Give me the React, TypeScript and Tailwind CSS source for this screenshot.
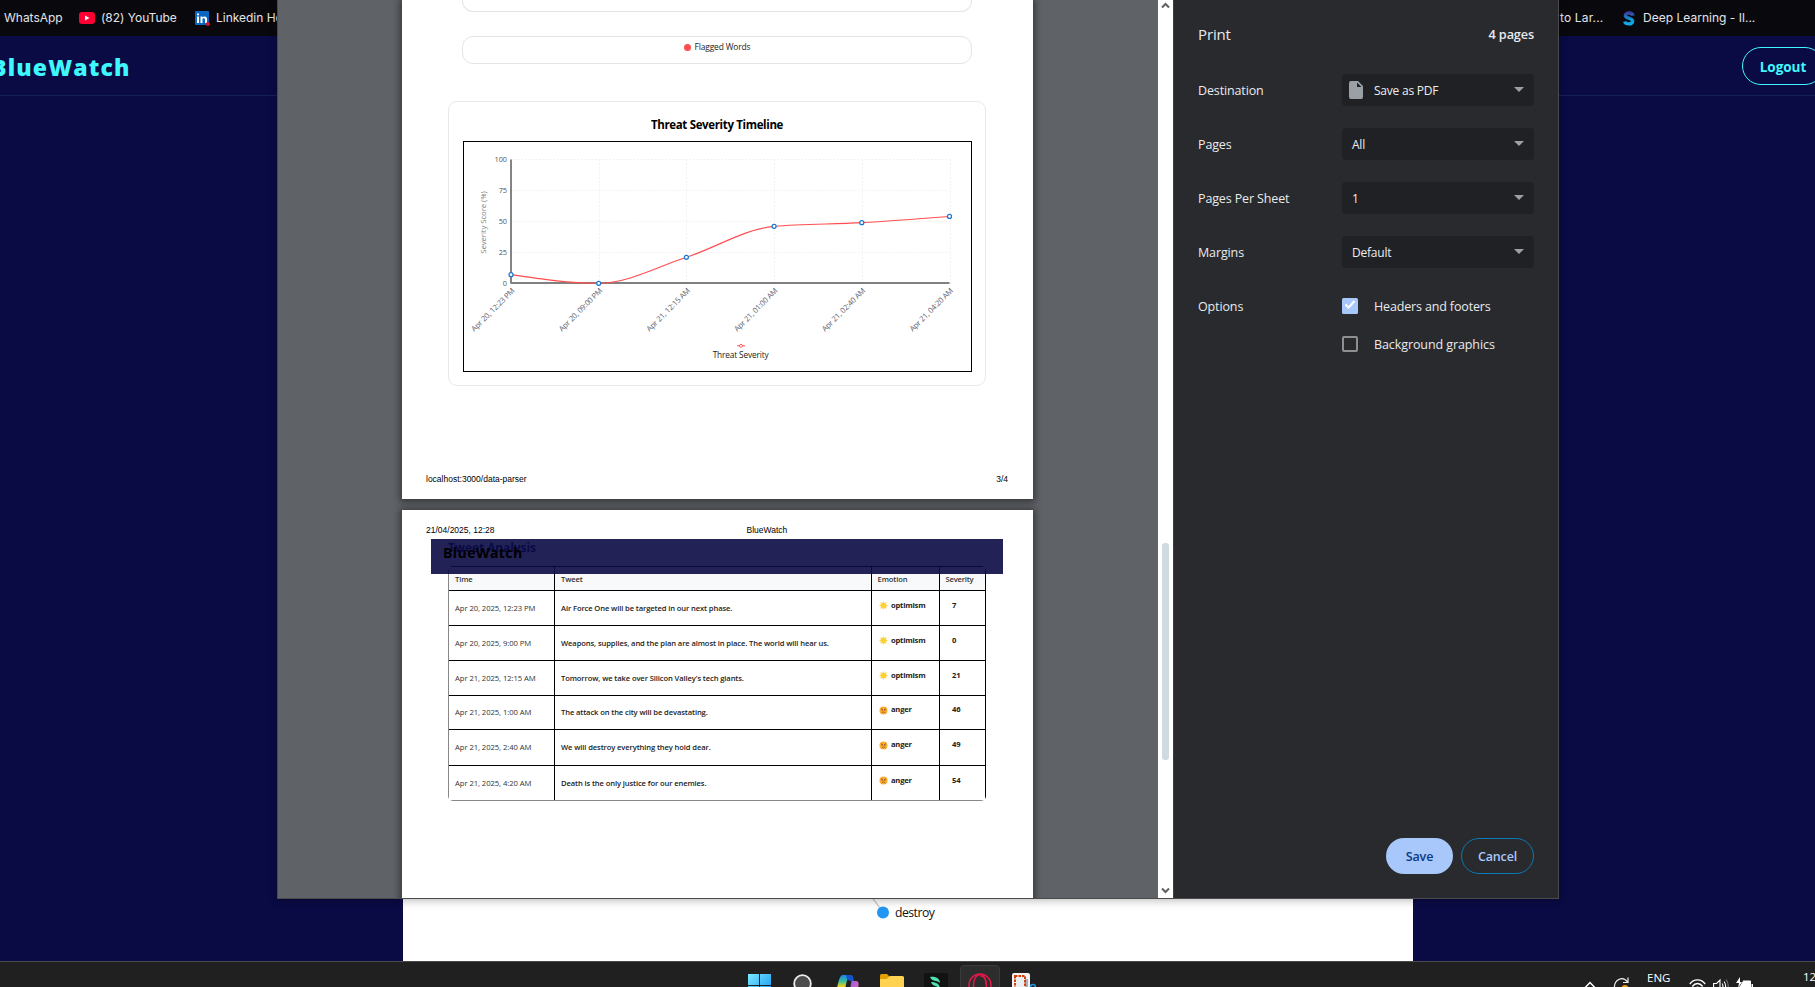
import type { ReactNode } from "react";

const UI = "font-['Open_Sans','Noto_Sans',sans-serif]";

const points = [
  { label: "Apr 20, 12:23 PM", value: 7 },
  { label: "Apr 20, 09:00 PM", value: 0 },
  { label: "Apr 21, 12:15 AM", value: 21 },
  { label: "Apr 21, 01:00 AM", value: 46 },
  { label: "Apr 21, 02:40 AM", value: 49 },
  { label: "Apr 21, 04:20 AM", value: 54 },
];

const rows = [
  { time: "Apr 20, 2025, 12:23 PM", tweet: "Air Force One will be targeted in our next phase.", emotion: "optimism", severity: 7, box: "h-[35px] border-black" },
  { time: "Apr 20, 2025, 9:00 PM", tweet: "Weapons, supplies, and the plan are almost in place. The world will hear us.", emotion: "optimism", severity: 0, box: "h-[35px] border-black" },
  { time: "Apr 21, 2025, 12:15 AM", tweet: "Tomorrow, we take over Silicon Valley's tech giants.", emotion: "optimism", severity: 21, box: "h-[35px] border-black" },
  { time: "Apr 21, 2025, 1:00 AM", tweet: "The attack on the city will be devastating.", emotion: "anger", severity: 46, box: "h-[34px] border-black" },
  { time: "Apr 21, 2025, 2:40 AM", tweet: "We will destroy everything they hold dear.", emotion: "anger", severity: 49, box: "h-[36px] border-black" },
  { time: "Apr 21, 2025, 4:20 AM", tweet: "Death is the only justice for our enemies.", emotion: "anger", severity: 54, box: "h-[35px] border-[#888]" },
];

const px = (i: number) => 47 + i * 87.7;
const py = (v: number) => 141.3 - v * 1.238;

// Monotone cubic interpolation through equally spaced points.
function monotonePath(values: number[]) {
  const xs = values.map((_, i) => px(i));
  const ys = values.map(py);
  const n = xs.length;
  const d = xs.slice(1).map((x, i) => (ys[i + 1] - ys[i]) / (x - xs[i]));
  const m = xs.map((_, i) => {
    if (i === 0 || i === n - 1) return 0;
    const s0 = d[i - 1];
    const s1 = d[i];
    return (Math.sign(s0) + Math.sign(s1)) * Math.min(Math.abs(s0), Math.abs(s1), Math.abs(s0 + s1) / 4) || 0;
  });
  m[0] = (3 * d[0] - m[1]) / 2;
  m[n - 1] = (3 * d[n - 2] - m[n - 2]) / 2;
  let out = `M${xs[0]},${ys[0]}`;
  for (let i = 0; i < n - 1; i++) {
    const h = (xs[i + 1] - xs[i]) / 3;
    out += `C${xs[i] + h},${ys[i] + m[i] * h} ${xs[i + 1] - h},${ys[i + 1] - m[i + 1] * h} ${xs[i + 1]},${ys[i + 1]}`;
  }
  return out;
}

function Chart() {
  const ticks = [0, 25, 50, 75, 100];
  return (
    <svg width="507" height="229" viewBox="0 0 507 229" className={UI}>
      {ticks.map((t) => (
        <line key={t} x1="47" x2="486" y1={Math.floor(py(t)) + 0.5} y2={Math.floor(py(t)) + 0.5} stroke="#f2f2f2" strokeDasharray="2 1.5" />
      ))}
      {points.map((p, i) => (
        <line key={p.label} x1={Math.round(px(i)) + 0.5} x2={Math.round(px(i)) + 0.5} y1={py(100)} y2={py(0) + 3} stroke="#f2f2f2" strokeDasharray="2 1.5" />
      ))}
      <line x1="47" x2="47" y1={py(100)} y2={py(0)} stroke="#666" strokeWidth="1.6" />
      <line x1="46.5" x2="485.5" y1="141" y2="141" stroke="#808080" strokeWidth="2" />
      {ticks.map((t) => (
        <text key={t} x="43" y={py(t) + 2.5} fontSize="7.4" letterSpacing="-0.1" textAnchor="end" fill="#555">
          {t}
        </text>
      ))}
      <text transform="translate(21.5 80.5) rotate(-90)" fontSize="7.8" letterSpacing="-0.1" textAnchor="middle" fill="#808080">
        Severity Score (%)
      </text>
      <path d={monotonePath(points.map((p) => p.value))} fill="none" stroke="#ff4d4f" strokeWidth="1.1" />
      {points.map((p, i) => (
        <g key={p.label}>
          <circle cx={px(i)} cy={py(p.value)} r="2" fill="#fff" stroke="#1976d2" strokeWidth="1.2" />
          <text transform={`translate(${px(i) + 4} ${149.3}) rotate(-45)`} fontSize="7.6" letterSpacing="-0.15" textAnchor="end" fill="#5b6270">
            {p.label}
          </text>
        </g>
      ))}
      <line x1="273" x2="281" y1="203.8" y2="203.8" stroke="#ff4d4f" />
      <circle cx="277" cy="203.8" r="1.5" fill="#fff" stroke="#ff4d4f" strokeWidth="0.9" />
      <text x="276.6" y="216.3" fontSize="8.3" letterSpacing="-0.15" textAnchor="middle" fill="#222">
        Threat Severity
      </text>
    </svg>
  );
}

function EmotionIcon({ kind }: { kind: string }) {
  if (kind === "optimism") {
    return (
      <svg width="9" height="9" viewBox="0 0 18 18">
        <path d="M9 0L11 3.900 15.400 2.600 14.100 7 18 9 14.100 11 15.400 15.400 11 14.100 9 18 7 14.100 2.600 15.400 3.900 11 0 9 3.900 7 2.600 2.600 7 3.900z" fill="#fbd54a" />
        <circle cx="9" cy="9" r="4.500" fill="#fdd02f" />
      </svg>
    );
  }
  return (
    <svg width="9" height="9" viewBox="0 0 18 18">
      <circle cx="9" cy="9" r="8" fill="#fbac35" />
      <path d="M4 5.500l4 2M14 5.500l-4 2M6.200 8v2M11.800 8v2M5.500 14c2-2.500 5-2.500 7 0" stroke="#7a4a20" strokeWidth="1.500" fill="none" />
    </svg>
  );
}

function ReportPages() {
  return (
    <div className={`ml-[124px] flex w-[631px] flex-col ${UI}`}>
      <section className="flex h-[499px] flex-col bg-white shadow-[0_1px_7px_2px_rgba(0,0,0,0.45)]">
        <div className="mr-[61px] ml-[60px] h-[12px] rounded-b-[11px] border border-t-0 border-[#e4e5e9]" />
        <div className="mt-[24px] mr-[61px] ml-[60px] flex h-[28px] items-start justify-center gap-[4px] rounded-[11px] border border-[#e4e5e9] pt-[4px] text-[8.400px] leading-[12px] tracking-[-0.120px] text-[#222]">
          <i className="mt-[3px] size-[7px] rounded-full bg-[#ff4d4f]" />
          Flagged Words
        </div>
        <div className="mt-[37px] mr-[47px] ml-[46px] flex h-[285px] flex-col items-center rounded-[9px] border border-[#e9e9ec] pt-[14px]">
          <h2 className="h-[25px] text-[11.500px] leading-[17px] font-bold tracking-[-0.350px] text-black">Threat Severity Timeline</h2>
          <div className="h-[231px] w-[509px] border border-black">
            <Chart />
          </div>
        </div>
        <footer className="mt-auto flex items-center justify-between pr-[25px] pb-[15px] pl-[24px] font-['Liberation_Sans',sans-serif] text-[8.500px] leading-[10px] text-black">
          <span>localhost:3000/data-parser</span>
          <span>3/4</span>
        </footer>
      </section>
      <section className="relative mt-[11px] flex h-[500px] flex-col bg-white shadow-[0_1px_7px_2px_rgba(0,0,0,0.45)]">
        <header className="flex h-[29px] pt-[15px] pl-[24px] font-['Liberation_Sans',sans-serif] text-[8.500px] leading-[10px] text-black">
          <span className="w-[320.500px]">21/04/2025, 12:28</span>
          <span>BlueWatch</span>
        </header>
        <h2 className="ml-[46px] h-[27px] text-[12px] leading-[17px] font-bold tracking-[-0.100px] text-[#00003c]">Tweet Analysis</h2>
        <div className="ml-[46px] w-[538px] overflow-hidden rounded-[5px]">
          <div className="border-t border-l border-t-black border-l-[#888] text-[7.600px] tracking-[-0.110px]">
            <div className="flex h-[24px] border-b border-black bg-[#f8f9fb] font-semibold text-[#333]">
              <div className="w-[106px] border-r border-black pt-[7px] pl-[6px] leading-[10px]">Time</div>
              <div className="w-[317px] border-r border-black pt-[7px] pl-[6px] leading-[10px]">Tweet</div>
              <div className="w-[68px] border-r border-black pt-[7px] pl-[5.500px] leading-[10px]">Emotion</div>
              <div className="w-[46px] border-r border-black pt-[7px] pl-[5.500px] leading-[10px] tracking-[-0.200px]">Severity</div>
            </div>
            {rows.map((r) => (
              <div key={r.time} className={`flex border-b ${r.box}`}>
                <div className="flex w-[106px] items-center border-r border-black pt-[1px] pl-[6px] text-[7.700px] tracking-[-0.080px] text-[#333]">{r.time}</div>
                <div className="flex w-[317px] items-center border-r border-black pt-[1px] pl-[6px] font-semibold text-[#222]">{r.tweet}</div>
                <div className="flex w-[68px] items-center gap-[3px] border-r border-black pb-[5px] pl-[7px] font-bold tracking-[-0.220px] text-[#222]">
                  <EmotionIcon kind={r.emotion} />
                  {r.emotion}
                </div>
                <div className="flex w-[46px] items-center border-r border-black pb-[5px] pl-[12px] font-bold text-[#222]">{r.severity}</div>
              </div>
            ))}
          </div>
        </div>
        <div className="absolute top-[29px] left-[29px] h-[35px] w-[572px] bg-[#0a0a45]/90 pt-[4px] pl-[12px] text-[14px] leading-[20px] font-bold tracking-[0.450px] text-black">
          BlueWatch
        </div>
      </section>
    </div>
  );
}

function Field({ label, children }: { label: string; children: ReactNode }) {
  return (
    <div className="flex h-[32px] items-center">
      <span className="w-[144px] pt-[2px]">{label}</span>
      <div className="flex h-full w-[192px] items-center rounded-[4px] bg-[#202124] pr-[10px] pl-[10px] text-[12px] tracking-[-0.220px] text-[#eceef1]">
        {children}
        <svg className="mb-[2px] ml-auto" width="10" height="5" viewBox="0 0 10 5">
          <path d="M0 0h10L5 5z" fill="#9aa0a6" />
        </svg>
      </div>
    </div>
  );
}

function Value({ children }: { children: ReactNode }) {
  return <span className="pt-[2px]">{children}</span>;
}

function PrintPanel() {
  return (
    <aside className={`flex flex-1 flex-col border-l border-[#3c3d40] bg-[#292a2d] pr-[24px] pl-[24px] text-[12.500px] tracking-[-0.130px] text-[#e8eaed] ${UI}`}>
      <div className="flex h-[74px] items-center justify-between pb-[5px]">
        <span className="text-[15px]">Print</span>
        <span className="pt-[1px] text-[12.700px] font-semibold">4 pages</span>
      </div>
      <div className="flex flex-col gap-[22px]">
        <Field label="Destination">
          <svg className="-ml-[3px] mr-[11px]" width="14" height="18" viewBox="0 0 14 18">
            <path fillRule="evenodd" d="M2 0h7l5 5v11a2 2 0 0 1-2 2H2a2 2 0 0 1-2-2V2a2 2 0 0 1 2-2zM8 1.500V6h4.500z" fill="#9aa0a6" />
          </svg>
          <Value>Save as PDF</Value>
        </Field>
        <Field label="Pages">
          <Value>All</Value>
        </Field>
        <Field label="Pages Per Sheet">
          <Value>1</Value>
        </Field>
        <Field label="Margins">
          <Value>Default</Value>
        </Field>
      </div>
      <div className="mt-[30px] flex">
        <span className="w-[144px] pt-[1px] leading-[16px]">Options</span>
        <div className="flex flex-col gap-[22px] leading-[16px]">
          <div className="flex h-[16px] gap-[16px]">
            <svg width="16" height="16" viewBox="0 0 16 16">
              <rect width="16" height="16" rx="1.500" fill="#a8c7fa" />
              <path d="M3.500 6.500L6.600 9.600 12.500 3" stroke="#fff" strokeWidth="2" fill="none" />
            </svg>
            <span className="pt-[1px] tracking-[-0.150px]">Headers and footers</span>
          </div>
          <div className="flex h-[16px] gap-[16px]">
            <span className="size-[16px] rounded-[2px] border-2 border-[#8f8f8f]" />
            <span className="pt-[1px] tracking-[-0.090px]">Background graphics</span>
          </div>
        </div>
      </div>
      <div className="mt-auto mb-[24px] flex justify-end gap-[8px] font-semibold">
        <button className="h-[36px] w-[67px] rounded-full bg-[#a8c7fa] pt-[2px] text-[#0b3a82]">Save</button>
        <button className="h-[36px] w-[73px] rounded-full border border-[#0b7ab5] pt-[2px] text-[#a8c7fa]">Cancel</button>
      </div>
    </aside>
  );
}

function Chevron({ down }: { down?: boolean }) {
  return (
    <svg width="9" height="7" viewBox="0 0 9 7">
      <path d={down ? "M1 1.500l3.500 3.500L8 1.500" : "M1 5.500L4.500 2 8 5.500"} stroke="#606060" strokeWidth="2" fill="none" />
    </svg>
  );
}

function PrintDialog() {
  return (
    <div className="absolute top-0 left-[277px] flex h-[899px] w-[1282px] overflow-hidden border-x border-b border-[#4a4a4a] bg-[#5f6266] shadow-[0_2px_8px_rgba(0,0,0,0.25)]">
      <div className="h-full w-[880px] overflow-hidden">
        <ReportPages />
      </div>
      <div className="flex w-[15px] flex-col items-center bg-white pt-[2px] pb-[4px]">
        <Chevron />
        <div className="mt-[534px] h-[217px] w-[7px] rounded-[3px] bg-[#d0dae2]" />
        <div className="mt-auto flex">
          <Chevron down />
        </div>
      </div>
      <PrintPanel />
    </div>
  );
}

function BookmarksBar() {
  return (
    <div className="flex h-[36px] items-center bg-[#09090d] font-['Inter',sans-serif] text-[12px] tracking-[-0.020px] whitespace-nowrap text-[#e4e4e8]">
      <span className="ml-[4px] w-[75px]">WhatsApp</span>
      <svg className="mr-[6px]" width="16" height="12" viewBox="0 0 16 12">
        <rect width="16" height="12" rx="3" fill="#ff0033" />
        <path d="M6 3.500v5L10.500 6z" fill="#fff" />
      </svg>
      <span className="w-[94px]">(82) YouTube</span>
      <svg className="mr-[6px]" width="15" height="15" viewBox="0 0 15 15">
        <rect width="14" height="14" rx="1" fill="#0a66c2" />
        <path d="M2 5.500h2V12H2zM2 2.500h2v1.800H2zM5.500 5.500h2v1c1-1.600 4.500-1.700 4.500 1.500v4h-2V8.500c0-1.800-2.500-1.800-2.500 0V12h-2z" fill="#fff" />
        <circle cx="13" cy="13" r="2" fill="#d11124" />
      </svg>
      <span className="w-[1344px]">Linkedin Home</span>
      <span className="w-[63px] tracking-[0.150px]">to Lar...</span>
      <svg className="mr-[8px]" width="12" height="15" viewBox="0 0 12 15">
        <defs>
          <linearGradient id="s-logo" x1="0" y1="0" x2="0" y2="1">
            <stop offset="0" stopColor="#3b3fa5" />
            <stop offset="0.600" stopColor="#079bdc" />
            <stop offset="1" stopColor="#12a9e6" />
          </linearGradient>
        </defs>
        <path d="M10 4.600C9.300 1.300 2.400 1 2.400 4.500c0 3.200 7.200 2.200 7.200 5.700 0 3.700-7 3.400-8 .2" fill="none" stroke="url(#s-logo)" strokeWidth="3.400" />
      </svg>
      <span className="tracking-[0.020px]">Deep Learning - Il...</span>
    </div>
  );
}

function Taskbar() {
  return (
    <div className={`flex h-[26px] items-start overflow-hidden border-t border-[#4b4b4b] bg-[#202020] text-white *:shrink-0 ${UI}`}>
      <svg className="mt-[12px] ml-[748px]" width="23" height="23" viewBox="0 0 23 23">
        <defs>
          <linearGradient id="win" x1="0" y1="0" x2="1" y2="1">
            <stop offset="0" stopColor="#7be9ff" />
            <stop offset="1" stopColor="#0a8ff0" />
          </linearGradient>
        </defs>
        <path d="M0 0h11v11H0zM12 0h11v11H12zM0 12h11v11H0zM12 12h11v11H12z" fill="url(#win)" />
      </svg>
      <svg className="mt-[12px] ml-[22px]" width="20" height="20" viewBox="0 0 20 20">
        <circle cx="9.500" cy="9.500" r="8.300" fill="#4c4c4c" stroke="#ececec" strokeWidth="1.800" />
      </svg>
      <svg className="mt-[13px] ml-[24px]" width="22" height="20" viewBox="0 0 22 20">
        <defs>
          <linearGradient id="cp-a" x1="0" y1="0" x2="0" y2="1">
            <stop offset="0" stopColor="#1788e8" />
            <stop offset="0.400" stopColor="#35c09a" />
            <stop offset="0.700" stopColor="#e8cf1d" />
          </linearGradient>
          <linearGradient id="cp-b" x1="0" y1="0" x2="1" y2="1">
            <stop offset="0" stopColor="#8d5cf0" />
            <stop offset="1" stopColor="#f06a9a" />
          </linearGradient>
        </defs>
        <path d="M6 0h8c-3 1-4 5-5.500 12L7 16H2C-1 16 0 12 2 5c1-3 2-5 4-5z" fill="url(#cp-a)" />
        <path d="M9 0h5c2 0 2.500 3 3 6h-3c-2 0-2.500-1.500-4-1.500z" fill="#1652c9" />
        <path d="M14.500 6H19c3 0 3 3 2 7l-2 7h-7z" fill="url(#cp-b)" />
      </svg>
      <svg className="mt-[12px] ml-[21px]" width="24" height="20" viewBox="0 0 24 20">
        <path d="M0 1.500Q0 0 1.500 0H7l3 3-3 4H0z" fill="#e2a100" />
        <path d="M0 5h6.500L10 2h12.500Q24 2 24 3.500V20H0z" fill="#ffd252" />
      </svg>
      <svg className="mt-[11px] ml-[20px]" width="24" height="20" viewBox="0 0 24 20">
        <rect width="24" height="24" rx="2" fill="#101312" />
        <path d="M6 4c6-1 10 2 10 6-3-3-8-1-10-6zM7 9c5 0 9 2 9 7-3-4-7-2-9-7z" fill="#4fe3b0" />
      </svg>
      <div className="mt-[3px] ml-[12px] h-[40px] w-[40px] rounded-[4px] border border-[#3a3a3a] bg-[#2d2d2d] pt-[7px] pl-[7px]">
        <svg width="24" height="24" viewBox="0 0 24 24" fill="none" stroke="#e0184a">
          <circle cx="12" cy="12" r="11" strokeWidth="1.500" />
          <ellipse cx="12" cy="12" rx="6.500" ry="10.500" strokeWidth="1.500" />
          <path d="M12 3c4 0 6 4 6 9" strokeWidth="1.200" />
        </svg>
      </div>
      <svg className="mt-[11px] ml-[12px]" width="24" height="20" viewBox="0 0 24 20">
        <rect width="18" height="20" rx="2" fill="#f3f3f3" />
        <path d="M13 6h3v14h-3z" fill="#a9adb3" />
        <rect x="3" y="3" width="10" height="14" fill="#e9eef3" stroke="#d83b01" strokeWidth="2" strokeDasharray="2.500 1" />
        <circle cx="21" cy="14" r="2.500" fill="none" stroke="#1b9de2" strokeWidth="1.500" />
      </svg>
      <svg className="mt-[19px] ml-[548px]" width="12" height="10" viewBox="0 0 12 10">
        <path d="M.8 7L6 1.500 11.200 7" stroke="#fff" strokeWidth="1.500" fill="none" />
      </svg>
      <svg className="mt-[15px] ml-[17px]" width="17" height="14" viewBox="0 0 17 14">
        <path d="M1.500 13C0 2 10-1.500 14.500 5M15 .5V5.500h-5" stroke="#eee" strokeWidth="1.200" fill="none" />
        <circle cx="12" cy="11.500" r="3.500" fill="#f59b0b" />
      </svg>
      <span className="mt-[8px] ml-[17px] w-[42px] text-[11.500px] leading-[16px]">ENG</span>
      <svg className="mt-[16px]" width="17" height="14" viewBox="0 0 17 14" fill="none" stroke="#fff" strokeWidth="1.400">
        <path d="M.8 6c4-5.500 11.400-5.500 15.400 0M3.300 8.500c3-4 7.400-4 10.400 0M5.800 11c1.700-2.300 3.700-2.300 5.400 0" />
      </svg>
      <svg className="mt-[16px] ml-[7px]" width="17" height="14" viewBox="0 0 17 14" fill="none" stroke="#fff" strokeWidth="1.100">
        <path d="M.6 5.500h3L7 2v12L3.600 10.500h-3zM9 5.500c1.200 1.500 1.200 3.500 0 5M11 3.500c2.200 2.500 2.200 6.500 0 9" />
        <path d="M13 1.500c3 3.500 3 9.500 0 13" stroke="#777" />
      </svg>
      <svg className="mt-[15px] ml-[6px]" width="18" height="14" viewBox="0 0 18 14">
        <path d="M4 0L0 6h3l-1 5 4-6H4z" fill="#fff" />
        <path d="M7 4h7.500v9H4V9" fill="#fff" stroke="#fff" />
        <path d="M15.500 7h1.500v5h-1.500z" fill="#fff" />
      </svg>
      <span className="mt-[7px] ml-[49px] text-[11.500px] leading-[16px] whitespace-nowrap">12:28</span>
    </div>
  );
}

export default function App() {
  return (
    <div className="relative flex h-[987px] w-[1815px] flex-col overflow-hidden bg-[#0a0a44]">
      <BookmarksBar />
      <nav className={`flex h-[60px] items-center justify-between border-b border-[#16205a] ${UI}`}>
        <span className="-ml-[9px] pt-[3px] text-[23px] leading-[30px] font-extrabold tracking-[1.150px] text-[#3ff8ff]">BlueWatch</span>
        <span className="-mr-[9px] flex h-[38px] w-[82px] items-center justify-center rounded-full border border-[#3ff8ff] pt-[3px] text-[13.500px] font-bold text-[#3ff8ff]">
          Logout
        </span>
      </nav>
      <main className="ml-[403px] flex w-[1010px] flex-1 items-end bg-white">
        <svg className={UI} width="1010" height="62" viewBox="0 0 1010 62">
          <path d="M468 -3L480 13" stroke="#ccc" strokeWidth="1.500" />
          <circle cx="480" cy="13.500" r="6" fill="#2196f3" />
          <text x="492" y="18" fontSize="12.200" letterSpacing="-0.500" fill="#111">
            destroy
          </text>
        </svg>
      </main>
      <Taskbar />
      <PrintDialog />
    </div>
  );
}
